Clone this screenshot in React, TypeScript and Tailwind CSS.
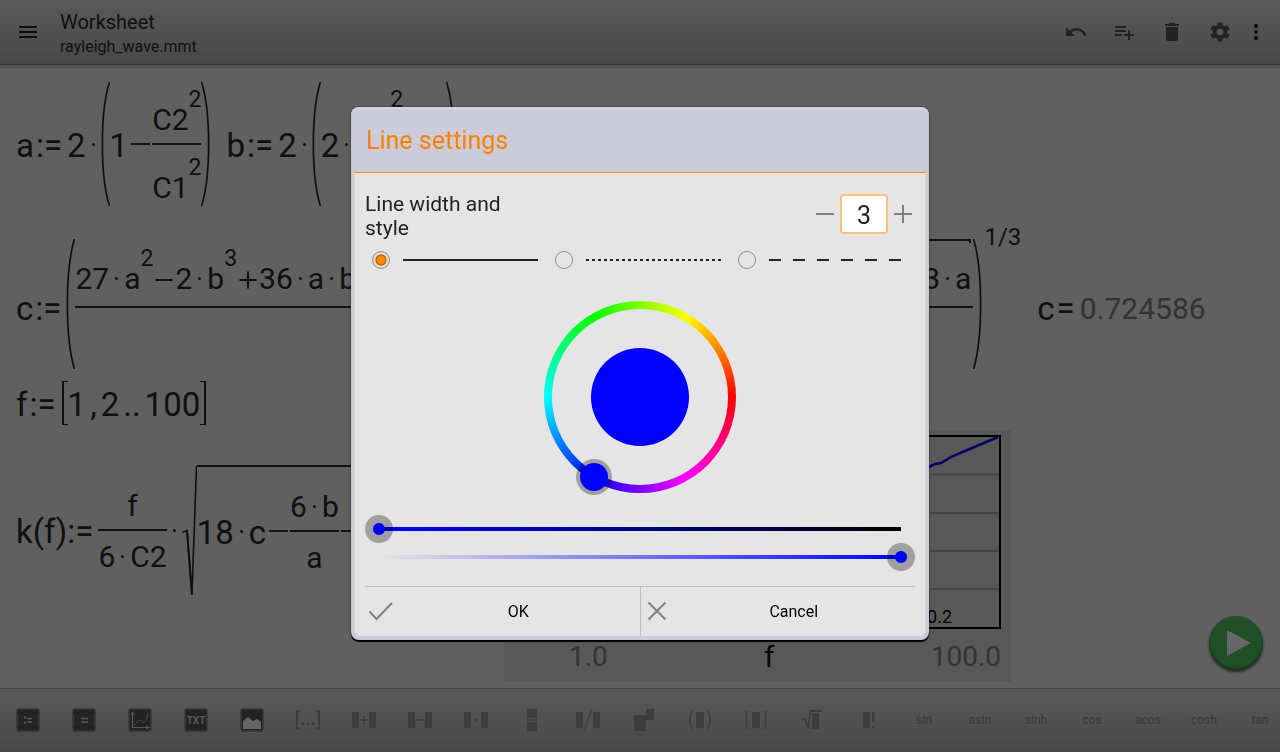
import clsx from 'clsx'
import { useState } from 'react'
import {
  MdDelete,
  MdMenu,
  MdMoreVert,
  MdPlaylistAdd,
  MdSettings,
  MdUndo,
} from 'react-icons/md'

/* ---------- formula building blocks ---------- */

interface ChildrenProps {
  children?: React.ReactNode
}

function Main({ children }: ChildrenProps) {
  return <span className="pt-[3px] text-[33px] leading-[34px]">{children}</span>
}

function Term({ children }: ChildrenProps) {
  return <span className="text-[30px] leading-[30px]">{children}</span>
}

function Sup({ children }: ChildrenProps) {
  return (
    <span className="mb-6 text-[23px] leading-[23px]">{children}</span>
  )
}

function Assign({ children = ':=', tight }: ChildrenProps & { tight?: boolean }) {
  return (
    <span
      className={clsx(
        'mr-[5px] pt-[3px] text-[33px] leading-[34px]',
        !tight && 'ml-0.5',
      )}
    >
      {children}
    </span>
  )
}

function Dot({ small }: { small?: boolean }) {
  return (
    <span className={clsx('flex w-[15px] justify-center', small && 'pb-3.5')}>
      <span className="size-[3px] rounded-full bg-[#2a2a2a]" />
    </span>
  )
}

function Minus() {
  return (
    <span className="flex w-6 justify-center">
      <span className="h-[2px] w-[19px] bg-[#333]" />
    </span>
  )
}

// plus and minus inside a numerator
function SmallSign({ plus }: { plus?: boolean }) {
  return (
    <svg className="mb-1 h-5 w-[22px]" viewBox="0 0 22 20">
      <path
        d={plus ? 'M2.500 10h17M11 1.500v17' : 'M2.500 10h17'}
        stroke="#2a2a2a"
        strokeWidth="2"
      />
    </svg>
  )
}

function Paren({ right, tall }: { right?: boolean; tall?: boolean }) {
  return (
    <svg
      className={clsx('w-[9px] shrink-0', tall ? 'h-[130px] self-start' : 'h-[124px]')}
      viewBox="0 0 9 124"
      preserveAspectRatio="none"
    >
      <path
        d={right ? 'M.5 0C10 30 10 94 .5 124' : 'M8.500 0C-1 30-1 94 8.500 124'}
        fill="none"
        stroke="#2a2a2a"
        strokeWidth="1.700"
      />
    </svg>
  )
}

function Fraction({
  top,
  bottom,
  className,
}: {
  top: React.ReactNode
  bottom?: React.ReactNode
  className?: string
}) {
  return (
    <div className={clsx('grid shrink-0 grid-rows-[1fr_2px_1fr]', className)}>
      <div className="flex items-end justify-center pb-2">{top}</div>
      <div className="bg-[#2a2a2a]" />
      <div className="flex items-end justify-center self-start pt-[11px]">
        {bottom}
      </div>
    </div>
  )
}

function RadicalHook() {
  return (
    <svg className="h-[131px] w-[15px] shrink-0" viewBox="0 0 15 131">
      <path
        d="M0 67.500l5-2 5 63L14.500 1"
        fill="none"
        stroke="#2a2a2a"
        strokeWidth="1.600"
      />
      <path d="M5 66l5 64" stroke="#2a2a2a" strokeWidth="2" />
    </svg>
  )
}

/* ---------- worksheet ---------- */

function Plot() {
  return (
    <div className="w-[507px] shrink-0 bg-[#dcdcdc] pt-[5px] pr-2.5 pl-[65px]">
      <svg
        className="block h-[194px] w-[432px]"
        viewBox="0 0 432 194"
        role="img"
        aria-label="k(f) plot"
      >
        <path
          d="M0 39.500h432M0 78h432M0 116h432M0 154h432"
          stroke="#aaa"
          strokeWidth="2"
        />
        <path
          d="M2 190C80 130 200 90 300 55L360 32l6-3 6-1 5-3 7-4L429 2"
          fill="none"
          stroke="#0000ff"
          strokeWidth="2.500"
        />
        <rect
          x="1"
          y="1"
          width="430"
          height="192"
          fill="none"
          stroke="#000"
          strokeWidth="2"
        />
        <text x="383" y="188" textAnchor="end" fontSize="18">
          0.2
        </text>
      </svg>
      <div className="mt-[13px] flex items-center justify-between text-[28px] leading-[30px] text-[#808080]">
        <span>1.0</span>
        <span className="text-[30px] text-[#111]">f</span>
        <span>100.0</span>
      </div>
    </div>
  )
}

function Worksheet() {
  return (
    <main className="relative flex-1 overflow-hidden bg-[#f0f0f0] pt-[17px] pb-1.5 pl-4 whitespace-nowrap text-[#2a2a2a] shadow-[inset_0_4px_4px_-2px_#bbb]">
      <div className="flex h-[124px] items-center gap-4">
        <div className="flex items-center">
          <Main>a</Main>
          <Assign />
          <Main>2</Main>
          <Dot />
          <Paren />
          <Main>1</Main>
          <Minus />
          <Fraction
            top={
              <>
                <Term>C2</Term>
                <Sup>2</Sup>
              </>
            }
            bottom={
              <>
                <Term>C1</Term>
                <Sup>2</Sup>
              </>
            }
          />
          <Paren right />
        </div>
        <div className="flex items-center">
          <Main>b</Main>
          <Assign />
          <Main>2</Main>
          <Dot />
          <Paren />
          <Main>2</Main>
          <Dot />
          <Fraction
            className="w-[92px]"
            top={
              <div className="flex h-[47px] flex-1 items-end pl-9">
                <Sup>2</Sup>
              </div>
            }
          />
          <Paren right />
        </div>
      </div>

      <div className="mt-[33px] flex h-[136px] items-center gap-4">
        <div className="flex h-full items-center">
          <Main>c</Main>
          <Assign />
          <Paren tall />
          <Fraction
            className="h-full w-[898px]"
            top={
              <div className="flex h-full w-full items-end justify-between">
                <div className="flex items-end pb-1">
                  <Term>27</Term>
                  <Dot small />
                  <Term>a</Term>
                  <Sup>2</Sup>
                  <SmallSign />
                  <Term>2</Term>
                  <Dot small />
                  <Term>b</Term>
                  <Sup>3</Sup>
                  <SmallSign plus />
                  <Term>36</Term>
                  <Dot small />
                  <Term>a</Term>
                  <Dot small />
                  <Term>b</Term>
                </div>
                <div className="mr-0.5 flex h-full w-80 flex-col justify-between pb-1">
                  <div className="h-1 border-t-2 border-r-2 border-[#2a2a2a]" />
                  <div className="flex items-end justify-end">
                    <Term>3</Term>
                    <Dot small />
                    <Term>a</Term>
                  </div>
                </div>
              </div>
            }
          />
          <Paren right tall />
          <span className="-mt-3.5 self-start pl-0.5 text-2xl leading-6">
            1/3
          </span>
        </div>
        <div className="flex items-center">
          <Main>c</Main>
          <Assign>=</Assign>
          <span className="pt-[3px] text-[30px] leading-[30px] text-[#808080]">
            0.724586
          </span>
        </div>
      </div>

      <div className="mt-1.5 flex h-11 items-center">
        <Main>f</Main>
        <Assign />
        <span className="ml-px h-full w-1.5 border-y border-l-2 border-[#2a2a2a]" />
        <span className="flex items-center gap-1">
          <Main>1</Main>
          <Main>,</Main>
          <Main>2</Main>
          <Main>..</Main>
          <Main>100</Main>
        </span>
        <span className="h-full w-1.5 border-y border-r-2 border-[#2a2a2a]" />
      </div>

      <div className="mt-[5px] flex h-[252px]">
        <div className="flex h-[200px] w-[488px] shrink-0 items-center">
          <Main>k(f)</Main>
          <Assign tight />
          <Fraction
            top={<Term>f</Term>}
            bottom={
              <>
                <Term>6</Term>
                <Dot small />
                <Term>C2</Term>
              </>
            }
          />
          <Dot />
          <RadicalHook />
          <div className="flex h-[131px] flex-1 items-center border-t-2 border-[#2a2a2a]">
            <Main>18</Main>
            <Dot />
            <Main>c</Main>
            <Minus />
            <Fraction
              top={
                <>
                  <Term>6</Term>
                  <Dot small />
                  <Term>b</Term>
                </>
              }
              bottom={<Term>a</Term>}
            />
            <Minus />
          </div>
        </div>
        <Plot />
      </div>

      <button
        aria-label="Calculate"
        className="absolute right-[17px] bottom-[18px] flex size-[54px] items-center justify-center rounded-full bg-[#4ec263] shadow-[inset_0_-2px_2px_#2c8a3e,0_2px_3px_#555]"
      >
        <svg className="ml-1.5 h-[26px] w-6" viewBox="0 0 24 26">
          <path d="M0 0l24 13L0 26z" fill="#fff" />
        </svg>
      </button>
    </main>
  )
}

/* ---------- bottom toolbar ---------- */

function Tile({ children }: ChildrenProps) {
  return (
    <svg className="size-6" viewBox="0 0 24 24">
      <rect
        x="1"
        y="1"
        width="22"
        height="22"
        rx="2"
        fill="#555"
        stroke="#aaa"
      />
      <rect x=".3" y=".3" width="23.400" height="23.400" rx="3" fill="none" stroke="#777" strokeWidth=".6" />
      {children}
    </svg>
  )
}

function Glyph({ children }: ChildrenProps) {
  return (
    <svg
      className="size-6"
      viewBox="0 0 24 24"
      fill="#999"
      stroke="#999"
      strokeWidth="0"
    >
      {children}
    </svg>
  )
}

const FUNCTIONS = ['sin', 'asin', 'sinh', 'cos', 'acos', 'cosh', 'tan']

const TOOLS = [
  {
    name: 'New equation',
    icon: (
      <Tile>
        <path d="M2.500 7.500h4v9h-4zM17.500 7.500h4v9h-4z" fill="none" stroke="#777" />
        <path d="M11 10.500h5M11 14h5" stroke="#ddd" strokeWidth="1.300" />
        <path d="M8 8.500h2v2H8zM8 13.500h2v2H8z" fill="#ddd" />
      </Tile>
    ),
  },
  {
    name: 'New result',
    icon: (
      <Tile>
        <path d="M2.500 7.500h4v9h-4zM17.500 7.500h4v9h-4z" fill="none" stroke="#777" />
        <path d="M9 10.500h7M9 14h7" stroke="#ddd" strokeWidth="1.300" />
      </Tile>
    ),
  },
  {
    name: 'New plot',
    icon: (
      <Tile>
        <path d="M4.500 5v14.500H20" fill="none" stroke="#ddd" strokeWidth="1.200" />
        <path d="M4.500 3l-2 3.500h4zM22 19.500l-4-2v4z" fill="#ddd" />
        <path
          d="M6 17c3-1 3-5 5.500-5s3 3 5 2 2.500-5 3.500-9"
          fill="none"
          stroke="#bbb"
        />
      </Tile>
    ),
  },
  {
    name: 'New text',
    icon: (
      <Tile>
        <text
          x="12"
          y="15.500"
          textAnchor="middle"
          fontSize="10"
          fontWeight="bold"
          fill="#ddd"
        >
          TXT
        </text>
      </Tile>
    ),
  },
  {
    name: 'New image',
    icon: (
      <Tile>
        <path d="M3 21v-8l5-4 5 4 4-2 4 3v7z" fill="#fff" />
      </Tile>
    ),
  },
  {
    name: 'Interval',
    icon: (
      <Glyph>
        <path
          d="M4.500 3.500H1v17h3.500M19.500 3.500H23v17h-3.500"
          fill="none"
          strokeWidth="2"
        />
        <path d="M6 14.500h2.500V17H6zM10.800 14.500h2.500V17h-2.500zM15.500 14.500H18V17h-2.500z" />
      </Glyph>
    ),
  },
  {
    name: 'Add',
    icon: (
      <Glyph>
        <path d="M0 4h7v16H0zM17 4h7v16h-7z" />
        <path d="M8 12h8M12 8v8" strokeWidth="1.500" />
      </Glyph>
    ),
  },
  {
    name: 'Subtract',
    icon: (
      <Glyph>
        <path d="M0 4h7v16H0zM17 4h7v16h-7z" />
        <path d="M7 12h10" strokeWidth="1.500" />
      </Glyph>
    ),
  },
  {
    name: 'Multiply',
    icon: (
      <Glyph>
        <path d="M0 4h7v16H0zM17 4h7v16h-7z" />
        <path d="M11 11h2v2h-2z" />
      </Glyph>
    ),
  },
  {
    name: 'Fraction',
    icon: (
      <Glyph>
        <path d="M7 1h10v9H7zM7 14h10v9H7z" />
        <path d="M6 12h12" strokeWidth="1.500" opacity=".7" />
      </Glyph>
    ),
  },
  {
    name: 'Divide',
    icon: (
      <Glyph>
        <path d="M0 4h7v16H0zM17 4h7v16h-7z" />
        <path d="M8 22l8-20" strokeWidth="1.200" />
      </Glyph>
    ),
  },
  {
    name: 'Power',
    icon: (
      <Glyph>
        <path d="M2 7h12v16H2zM14 1h8v11h-8z" />
      </Glyph>
    ),
  },
  {
    name: 'Parentheses',
    icon: (
      <Glyph>
        <path d="M8 4h8v16H8z" />
        <path
          d="M4.500 3C.8 8 .8 16 4.500 21M19.500 3c3.700 5 3.700 13 0 18"
          fill="none"
          strokeWidth="1.700"
        />
      </Glyph>
    ),
  },
  {
    name: 'Absolute value',
    icon: (
      <Glyph>
        <path d="M8 4h8v16H8z" />
        <path d="M2.500 3v18M21.500 3v18" strokeWidth="2" />
      </Glyph>
    ),
  },
  {
    name: 'Square root',
    icon: (
      <Glyph>
        <path d="M12 5h7v16h-7z" />
        <path
          d="M2 12l3-1.500L8 21l2.500-18H22"
          fill="none"
          strokeWidth="1.800"
        />
      </Glyph>
    ),
  },
  {
    name: 'Factorial',
    icon: (
      <Glyph>
        <path d="M7 4h7v16H7zM16 4h2.500v10.500H16zM16 17.500h2.500V20H16z" />
      </Glyph>
    ),
  },
]

function BottomToolbar() {
  return (
    <footer className="flex h-16 shrink-0 items-center overflow-hidden border-t border-[#a5a5a5] bg-linear-to-b from-[#e0e0e0] to-[#b4b4b4] pb-0.5">
      {TOOLS.map((tool) => (
        <button
          key={tool.name}
          aria-label={tool.name}
          className="flex h-full w-14 shrink-0 items-center justify-center"
        >
          {tool.icon}
        </button>
      ))}
      {FUNCTIONS.map((name) => (
        <button
          key={name}
          className="h-full w-14 shrink-0 text-xs font-medium text-[#999]"
        >
          {name}
        </button>
      ))}
    </footer>
  )
}

/* ---------- header ---------- */

function Header() {
  return (
    <header className="flex h-[65px] shrink-0 items-center border-b border-[#808080] bg-linear-to-b from-[#e0e0e0] to-[#b4b4b4] pr-3">
      <button aria-label="Menu" className="flex w-14 justify-center">
        <MdMenu size={24} className="text-[#222]" />
      </button>
      <div className="flex-1 pt-[5px] pl-1 text-[#2a2a2a]">
        <h1 className="text-xl leading-6">Worksheet</h1>
        <p className="mt-px text-base leading-6">rayleigh_wave.mmt</p>
      </div>
      <div className="flex items-center text-[#555]">
        <button aria-label="Undo" className="flex w-12 justify-center">
          <MdUndo size={24} />
        </button>
        <button aria-label="Add element" className="flex w-12 justify-center">
          <MdPlaylistAdd size={24} />
        </button>
        <button aria-label="Discard" className="flex w-12 justify-center">
          <MdDelete size={24} />
        </button>
        <button aria-label="Settings" className="flex w-12 justify-center">
          <MdSettings size={24} />
        </button>
        <button aria-label="More options" className="text-[#222]">
          <MdMoreVert size={24} />
        </button>
      </div>
    </header>
  )
}

/* ---------- line settings dialog ---------- */

const LINE_STYLES = [
  { id: 'solid', dash: undefined },
  { id: 'dotted', dash: '3 3' },
  { id: 'dashed', dash: '12 12' },
]

const SLIDER =
  'block h-7 w-full appearance-none bg-[length:calc(100%-28px)_4px] bg-center bg-no-repeat [&::-webkit-slider-thumb]:size-7 [&::-webkit-slider-thumb]:appearance-none [&::-webkit-slider-thumb]:rounded-full [&::-webkit-slider-thumb]:bg-[radial-gradient(circle,#0000ff_5.500px,rgba(0,0,0,0.3)_6.500px)]'

function ColorWheel() {
  return (
    <div className="relative mx-auto mt-[21px] flex size-48 items-center justify-center rounded-full bg-[conic-gradient(from_90deg,#f00,#f0f,#00f,#0ff,#0f0,#ff0,#f00)]">
      <div className="flex size-44 items-center justify-center rounded-full bg-[#e5e5e5]">
        <div className="size-[98px] rounded-full bg-[#0000ff]" />
      </div>
      <div className="absolute top-[158px] left-8 flex size-9 items-center justify-center rounded-full bg-black/30">
        <div className="size-7 rounded-full bg-[#0000ff]" />
      </div>
    </div>
  )
}

function LineSettingsDialog() {
  const [width, setWidth] = useState(3)
  const [lineStyle, setLineStyle] = useState('solid')

  return (
    <div
      role="dialog"
      aria-labelledby="dialog-title"
      className="w-[578px] max-w-full rounded-lg bg-[#cbcbd9] px-[3px] pb-1 shadow-[0_2px_1px_#000,0_0_2px_#222,inset_0_2px_0_#d4d4df]"
    >
      <h2
        id="dialog-title"
        className="flex h-[66px] items-center border-b border-[#ff8800] pt-0.5 pl-3 text-[25px] text-[#ff8000]"
      >
        Line settings
      </h2>
      <div className="rounded-b-md border-x border-[#d8d8e2] bg-[#e5e5e5] px-2.5 pt-[15px]">
        <div className="flex items-center justify-between">
          <label
            htmlFor="line-width"
            className="w-[180px] pt-1 text-[21px] leading-6 text-[#222]"
          >
            Line width and style
          </label>
          <div className="flex items-center text-[#808080]">
            <button
              aria-label="Decrease width"
              className="flex w-[30px] justify-center"
              onClick={() => setWidth(Math.max(1, width - 1))}
            >
              <svg className="size-5" viewBox="0 0 20 20" stroke="currentColor">
                <path d="M1 10h18" strokeWidth="2" />
              </svg>
            </button>
            <input
              id="line-width"
              value={width}
              onChange={(e) => setWidth(Number(e.target.value) || 1)}
              className="h-10 w-12 rounded-sm border-2 border-[#fdbf7c] bg-white pt-0.5 text-center text-[25px] text-[#222] outline-none"
            />
            <button
              aria-label="Increase width"
              className="flex w-[27px] justify-center pl-[3px]"
              onClick={() => setWidth(width + 1)}
            >
              <svg className="size-5" viewBox="0 0 20 20" stroke="currentColor">
                <path d="M1 10h18M10 1v18" strokeWidth="2" />
              </svg>
            </button>
          </div>
        </div>

        <div className="grid h-10 grid-cols-[183px_183px_minmax(0,1fr)]">
          {LINE_STYLES.map(({ id, dash }) => (
            <label key={id} className="flex items-center pr-2.5">
              <span className="flex w-8 shrink-0 justify-center">
                <input
                  type="radio"
                  name="line-style"
                  aria-label={id}
                  checked={lineStyle === id}
                  onChange={() => setLineStyle(id)}
                  className="size-[18px] appearance-none rounded-full border border-[#909090] checked:bg-[radial-gradient(circle,#ff8800_4px,#8a5c28_5px,#f0d8b8_6px)]"
                />
              </span>
              <svg className="ml-1.5 h-0.5 w-0 flex-1">
                <line
                  x1="0"
                  y1="1"
                  x2="100%"
                  y2="1"
                  stroke="#222"
                  strokeWidth="2"
                  strokeDasharray={dash}
                />
              </svg>
            </label>
          ))}
        </div>

        <ColorWheel />

        <div className="mt-[22px]">
          <input
            type="range"
            aria-label="Brightness"
            defaultValue={0}
            className={clsx(
              SLIDER,
              'bg-[linear-gradient(to_right,#0000ff,#000000)]',
            )}
          />
          <input
            type="range"
            aria-label="Opacity"
            defaultValue={100}
            className={clsx(
              SLIDER,
              'bg-[linear-gradient(to_right,rgba(0,0,255,0),#0000ff)]',
            )}
          />
        </div>

        <div className="mt-[15px] flex border-t border-[#bdbdbd] text-base text-black">
          <button className="flex h-[49px] flex-1 items-center">
            <svg className="h-8 w-8" viewBox="0 0 32 32">
              <path
                d="M4.500 15.500l7 7.500L27 7"
                fill="none"
                stroke="#808080"
                strokeWidth="2"
              />
            </svg>
            <span className="flex-1">OK</span>
          </button>
          <button className="flex h-[49px] flex-1 items-center border-l border-[#bdbdbd]">
            <svg className="h-8 w-8" viewBox="0 0 32 32">
              <path
                d="M7.500 6.500l17 17M24.500 6.500l-17 17"
                stroke="#808080"
                strokeWidth="2"
              />
            </svg>
            <span className="flex-1">Cancel</span>
          </button>
        </div>
      </div>
    </div>
  )
}

export default function App() {
  return (
    <div className="flex min-h-screen flex-col overflow-hidden font-[Roboto,sans-serif]">
      <Header />
      <Worksheet />
      <BottomToolbar />
      <div className="fixed inset-0 flex items-center justify-center bg-black/60 pb-[5px]">
        <LineSettingsDialog />
      </div>
    </div>
  )
}
